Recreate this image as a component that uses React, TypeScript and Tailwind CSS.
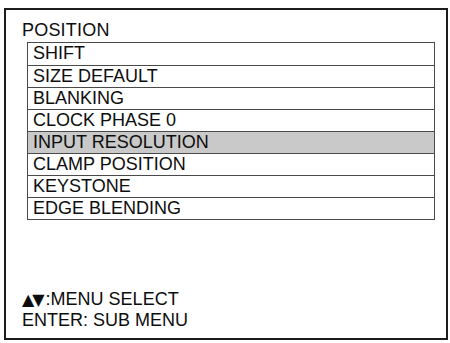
import React from "react";

const items = [
  "SHIFT",
  "SIZE DEFAULT",
  "BLANKING",
  "CLOCK PHASE 0",
  "INPUT RESOLUTION",
  "CLAMP POSITION",
  "KEYSTONE",
  "EDGE BLENDING",
];

export default function App() {
  return (
    <div className="w-[450px] h-[343px] bg-white pt-[8px] pl-[4px] font-['Liberation_Sans',Arial,sans-serif] text-[#0d0d0d] text-[18px]">
      <div className="w-[444px] h-[332px] border-2 border-[#1c1c1c] flex flex-col pt-[10px] pb-[7px]">
        <div className="pl-[16px] leading-[20px] h-[20px] tracking-[0.2px]">POSITION</div>
        <div className="ml-[21px] mt-[2px] w-[408px] border border-[#4a4a4a] flex flex-col">
          {items.map((it, i) => (
            <div
              key={it}
              className={
                (i > 0 ? "border-t border-[#4a4a4a] " : "") +
                (i === 4 ? "bg-[#c9c9c9] " : "bg-white ") +
                "h-[22px] leading-[21px] pl-[5px] whitespace-nowrap"
              }
            >
              {it}
            </div>
          ))}
        </div>
        <div className="mt-auto pl-[16px] leading-[21px]">
          <div className="flex items-baseline whitespace-nowrap h-[21px] overflow-visible">
            <span className="font-['DejaVu_Sans',sans-serif] text-[16px] leading-[21px] tracking-[-2px]">▲▼</span>
            <span className="ml-[3px]">:MENU SELECT</span>
          </div>
          <div className="whitespace-nowrap h-[21px]">ENTER: SUB MENU</div>
        </div>
      </div>
    </div>
  );
}
